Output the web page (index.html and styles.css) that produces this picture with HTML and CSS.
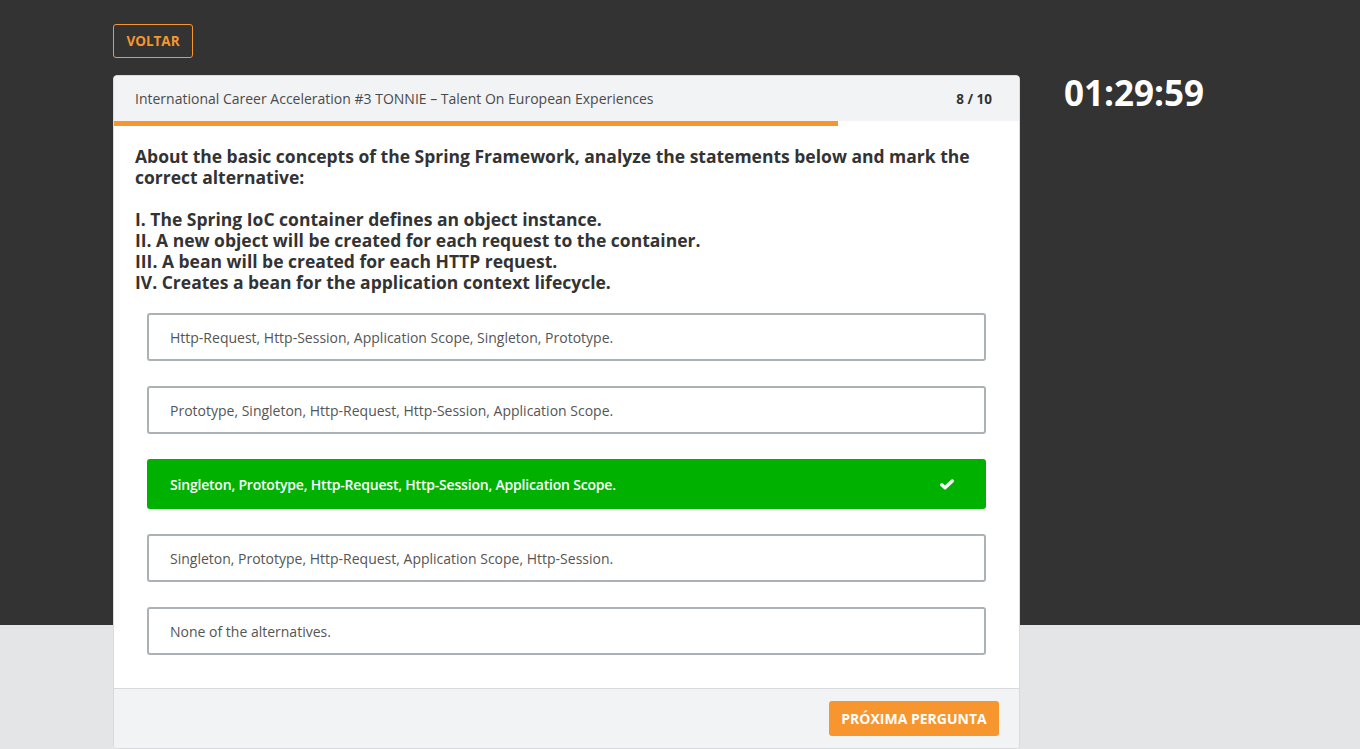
FILE: index.html
```html
<!DOCTYPE html>
<html>
<head>
<meta charset="utf-8">
<link rel="stylesheet" href="styles.css">
</head>
<body>
<div class="page">
  <div class="topbar">
    <button class="btn-back">VOLTAR</button>
  </div>
  <div class="main">
    <div class="card">
      <div class="card-head">
        <span class="quiz-title">International Career Acceleration #3 TONNIE – Talent On European Experiences</span>
        <span class="count">8 / 10</span>
      </div>
      <div class="progress"><div class="progress-fill" style="width:80%"></div></div>
      <div class="card-body">
        <div class="question">
          <p>About the basic concepts of the Spring Framework, analyze the statements below and mark the correct alternative:</p>
          <p>I. The Spring IoC container defines an object instance.<br>II. A new object will be created for each request to the container.<br>III. A bean will be created for each HTTP request.<br>IV. Creates a bean for the application context lifecycle.</p>
        </div>
        <ul class="options">
          <li class="option">Http-Request, Http-Session, Application Scope, Singleton, Prototype.</li>
          <li class="option">Prototype, Singleton, Http-Request, Http-Session, Application Scope.</li>
          <li class="option selected"><span>Singleton, Prototype, Http-Request, Http-Session, Application Scope.</span>
            <svg class="check" viewBox="0 0 16 12" width="14" height="11"><path d="M2 6.3 L5.8 9.8 L14 2" fill="none" stroke="#fff" stroke-width="3.8" stroke-linecap="round" stroke-linejoin="round"/></svg>
          </li>
          <li class="option">Singleton, Prototype, Http-Request, Application Scope, Http-Session.</li>
          <li class="option">None of the alternatives.</li>
        </ul>
      </div>
      <div class="card-foot">
        <button class="btn-next">PRÓXIMA PERGUNTA</button>
      </div>
    </div>
    <div class="timer">01:29:59</div>
  </div>
</div>
</body>
</html>
```

FILE: styles.css
```css
* { box-sizing: border-box; }
html, body { margin: 0; padding: 0; }
body {
  font-family: "Open Sans", "Noto Sans", sans-serif;
  background: linear-gradient(to bottom, #333333 0, #333333 625px, #e4e5e7 625px);
  min-height: 749px;
  color: #333;
}
.page { padding-left: 113px; }
.topbar { padding-top: 24px; height: 75px; }
.btn-back {
  font-family: inherit;
  background: transparent;
  border: 1px solid #f7962e;
  border-radius: 3px;
  color: #f7962e;
  font-weight: 700;
  font-size: 13.5px;
  width: 80px;
  height: 34px;
  padding: 0;
  cursor: pointer;
}
.main { display: flex; align-items: flex-start; }
.card {
  width: 907px;
  background: #fff;
  border: 1px solid #d8dadd;
  border-radius: 4px;
  overflow: hidden;
}
.card-head {
  background: #f2f3f5;
  height: 45px;
  display: flex;
  align-items: center;
  justify-content: space-between;
  padding: 0 27px 0 21px;
  font-size: 14px;
  color: #4a4a4a;
}
.count { font-weight: 700; color: #333; font-size: 13.5px; }
.progress { height: 5px; background: #fff; }
.progress-fill { height: 100%; background: #f7962e; }
.card-body { padding: 20px 33px 33px 33px; }
.question {
  margin: 0 -12px;
  font-weight: 700;
  font-size: 17.5px;
  line-height: 21px;
  color: #333;
}
.question p { margin: 0 0 21px 0; }
.question p:last-child { margin-bottom: 20px; }
.options { list-style: none; margin: 0; padding: 0; display: flex; flex-direction: column; gap: 25px; }
.option {
  height: 48px;
  border: 2px solid #abb1b5;
  border-radius: 3px;
  display: flex;
  align-items: center;
  justify-content: space-between;
  padding: 0 30px 0 21px;
  font-size: 14px;
  color: #555;
}
.option.selected {
  background: #00b100;
  border-color: #00b100;
  color: #fff;
  font-weight: 600;
  height: 50px;
  letter-spacing: -0.2px;
}
.check { display: block; }
.card-foot {
  background: #f2f3f5;
  border-top: 1px solid #d8dadd;
  height: 60px;
  display: flex;
  align-items: center;
  justify-content: flex-end;
  padding: 0 20px 0 0;
}
.btn-next {
  font-family: inherit;
  background: #f7962e;
  border: none;
  border-radius: 3px;
  color: #fff;
  font-weight: 700;
  font-size: 14px;
  width: 170px;
  height: 35px;
  padding: 0;
}
.timer {
  margin-left: 44px;
  color: #fff;
  font-weight: 700;
  font-size: 35px;
  line-height: 36px;
}
```
